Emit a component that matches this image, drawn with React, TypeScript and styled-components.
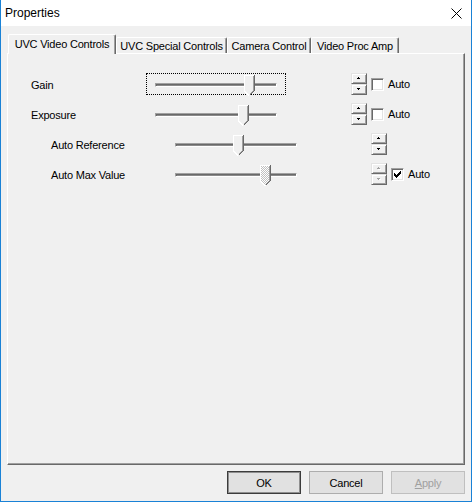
import React from "react";
import styled, { createGlobalStyle, css } from "styled-components";

const GlobalStyle = createGlobalStyle`
  html, body { margin: 0; padding: 0; background: #f0f0f0; overflow: hidden; }
  * { box-sizing: border-box; }
`;

const FONT = `"Liberation Sans", Arial, sans-serif`;

const Window = styled.div`
  width: 472px;
  height: 502px;
  display: flex;
  flex-direction: column;
  background: #f0f0f0;
  border: 1px solid #1a82d6;
  border-top: none;
  font-family: ${FONT};
  font-size: 11px;
  letter-spacing: -0.2px;
  color: #000;
`;

const TitleBar = styled.div`
  height: 26px;
  flex: none;
  background: #fff;
  display: flex;
  align-items: center;
  justify-content: space-between;
  padding: 0 9px 0 4px;
`;

const Title = styled.span`
  font-size: 12px;
  letter-spacing: 0;
  font-family: ${FONT};
`;

const Body = styled.div`
  flex: 1;
  display: flex;
  flex-direction: column;
  padding: 8px 6px 7px 6px;
  min-height: 0;
`;

const TabStrip = styled.div`
  height: 19px;
  flex: none;
  display: flex;
  align-items: flex-end;
  padding-left: 1px;
`;

const Tab = styled.div<{ $active?: boolean; $w: number }>`
  width: ${(p) => p.$w}px;
  height: ${(p) => (p.$active ? 20 : 16)}px;
  flex: none;
  display: flex;
  align-items: center;
  justify-content: center;
  white-space: nowrap;
  background: #f0f0f0;
  border-top: 1px solid #fff;
  border-left: 1px solid #fff;
  border-right: 1px solid #696969;
  box-shadow: inset -1px 0 0 #a0a0a0;
  border-radius: 2px 2px 0 0;
  ${(p) =>
    p.$active
      ? css`
          margin-bottom: -1px;
          position: relative;
          z-index: 1;
          padding-bottom: 2px;
        `
      : css`
          padding-top: 1px;
        `}
`;

const Panel = styled.div`
  flex: 1;
  display: flex;
  flex-direction: column;
  gap: 8px;
  padding: 19px 0 0 23px;
  border-top: 1px solid #fff;
  border-left: 1px solid #fff;
  border-right: 1px solid #696969;
  border-bottom: 1px solid #696969;
  box-shadow: inset -1px -1px 0 #a0a0a0;
`;

const Row = styled.div<{ $indent?: number }>`
  height: 22px;
  display: flex;
  align-items: center;
  padding-left: ${(p) => p.$indent ?? 0}px;
`;

const Label = styled.div`
  width: 115px;
  flex: none;
  white-space: nowrap;
  padding-top: 1px;
`;

const SliderBox = styled.div<{ $focused?: boolean }>`
  position: relative;
  width: 140px;
  height: 22px;
  flex: none;
  padding: 10px 8px 0 8px;
  border: 1px dotted ${(p) => (p.$focused ? "#000" : "transparent")};
`;

const Track = styled.div`
  height: 4px;
  margin-top: -1px;
  border-top: 1px solid #a0a0a0;
  border-left: 1px solid #a0a0a0;
  border-bottom: 1px solid #fff;
  border-right: 1px solid #fff;
  background: #8a8a8a;
  box-shadow: inset 1px 1px 0 #696969;
`;

const ThumbWrap = styled.div`
  position: absolute;
  top: 1px;
  width: 11px;
  height: 21px;
  line-height: 0;
`;

const Thumb: React.FC<{ disabled?: boolean; left: number }> = ({ disabled, left }) => (
  <ThumbWrap style={{ left }}>
    <svg width="11" height="21" viewBox="0 0 11 21" shapeRendering="crispEdges">
      <defs>
        <pattern id="hatch" width="2" height="2" patternUnits="userSpaceOnUse">
          <rect width="2" height="2" fill="#ffffff" />
          <rect width="1" height="1" fill="#c0c0c0" />
          <rect x="1" y="1" width="1" height="1" fill="#c0c0c0" />
        </pattern>
      </defs>
      <polygon points="0,0 11,0 11,16 5.5,21 0,16" fill={disabled ? "url(#hatch)" : "#f0f0f0"} />
      <polyline points="5,20.5 0.5,16 0.5,0.5 10,0.5" fill="none" stroke="#fff" />
      <polyline points="9.5,1 9.5,15.5 5.5,19.5" fill="none" stroke="#a0a0a0" />
      <polyline points="10.5,0 10.5,15.5 5.5,20.5" fill="none" stroke="#696969" />
    </svg>
  </ThumbWrap>
);

const Slider: React.FC<{ value: number; focused?: boolean; disabled?: boolean }> = ({
  value,
  focused,
  disabled,
}) => (
  <SliderBox $focused={focused}>
    <Track />
    <Thumb disabled={disabled} left={Math.round(2 + value * 123)} />
  </SliderBox>
);

const Spinner = styled.div<{ $gap: number }>`
  margin-left: ${(p) => p.$gap}px;
  width: 16px;
  height: 22px;
  flex: none;
  display: flex;
  flex-direction: column;
`;

const SpinButton = styled.div`
  height: 11px;
  display: flex;
  align-items: center;
  justify-content: center;
  background: #f0f0f0;
  border-top: 1px solid #e3e3e3;
  border-left: 1px solid #e3e3e3;
  border-bottom: 1px solid #696969;
  border-right: 1px solid #696969;
  box-shadow: inset 1px 1px 0 #fff, inset -1px -1px 0 #a0a0a0;
  line-height: 0;
`;

const Arrow: React.FC<{ up?: boolean; disabled?: boolean }> = ({ up, disabled }) => {
  const c = disabled ? "#a0a0a0" : "#000";
  return (
    <svg width="4" height="3" viewBox="0 0 4 3" shapeRendering="crispEdges">
      {disabled && <rect x="1" y={up ? 2 : 1} width="3" height="1" fill="#fff" />}
      {up ? (
        <>
          <rect x="1" y="0" width="1" height="1" fill={c} />
          <rect x="0" y="1" width="3" height="1" fill={c} />
        </>
      ) : (
        <>
          <rect x="0" y="0" width="3" height="1" fill={c} />
          <rect x="1" y="1" width="1" height="1" fill={c} />
        </>
      )}
    </svg>
  );
};

const Spin: React.FC<{ gap: number; disabled?: boolean }> = ({ gap, disabled }) => (
  <Spinner $gap={gap}>
    <SpinButton>
      <Arrow up disabled={disabled} />
    </SpinButton>
    <SpinButton>
      <Arrow disabled={disabled} />
    </SpinButton>
  </Spinner>
);

const CheckLabel = styled.label`
  display: flex;
  align-items: center;
  gap: 4px;
  margin-left: 4px;
  white-space: nowrap;
`;

const Box = styled.span`
  width: 13px;
  height: 13px;
  flex: none;
  display: flex;
  align-items: center;
  justify-content: center;
  background: #fff;
  border-top: 1px solid #a0a0a0;
  border-left: 1px solid #a0a0a0;
  border-bottom: 1px solid #fff;
  border-right: 1px solid #fff;
  box-shadow: inset 1px 1px 0 #696969, inset -1px -1px 0 #e3e3e3;
  line-height: 0;
`;

const Check: React.FC<{ checked?: boolean }> = ({ checked }) => (
  <CheckLabel>
    <Box>
      {checked && (
        <svg width="7" height="7" viewBox="0 0 7 7" shapeRendering="crispEdges">
          <path
            d="M0 2h1v1h1v1h1v-1h1v-1h1v-1h1v-1h1v3h-1v1h-1v1h-1v1h-1v1h-1v-1h-1v-1h-1v-1h-1z"
            fill="#000"
          />
        </svg>
      )}
    </Box>
    Auto
  </CheckLabel>
);

const ButtonBar = styled.div`
  flex: none;
  display: flex;
  justify-content: flex-end;
  gap: 8px;
  margin-top: 6px;
  height: 23px;
`;

const Button = styled.button<{ $default?: boolean }>`
  width: 74px;
  height: 23px;
  padding: 0;
  font-family: ${FONT};
  font-size: 11px;
  letter-spacing: -0.2px;
  color: ${(p) => (p.disabled ? "#a0a0a0" : "#000")};
  background: #e1e1e1;
  border: 1px solid ${(p) => (p.$default ? "#3c3c3c" : p.disabled ? "#bfbfbf" : "#adadad")};
  box-shadow: ${(p) => (p.$default ? "inset 0 0 0 1px #8f8f8f" : "none")};
  u { text-decoration: underline; }
`;

const CloseIcon = () => (
  <svg width="11" height="11" viewBox="0 0 11 11">
    <path d="M0.5 0.5L10.5 10.5M10.5 0.5L0.5 10.5" stroke="#000" strokeWidth="1" />
  </svg>
);

export default function App() {
  return (
    <>
      <GlobalStyle />
      <Window>
        <TitleBar>
          <Title>Properties</Title>
          <CloseIcon />
        </TitleBar>
        <Body>
          <TabStrip>
            <Tab $active $w={108}>UVC Video Controls</Tab>
            <Tab $w={111}>UVC Special Controls</Tab>
            <Tab $w={84}>Camera Control</Tab>
            <Tab $w={88}>Video Proc Amp</Tab>
          </TabStrip>
          <Panel>
            <Row>
              <Label>Gain</Label>
              <Slider value={0.77} focused />
              <Spin gap={65} />
              <Check />
            </Row>
            <Row>
              <Label>Exposure</Label>
              <Slider value={0.72} />
              <Spin gap={65} />
              <Check />
            </Row>
            <Row $indent={20}>
              <Label>Auto Reference</Label>
              <Slider value={0.52} />
              <Spin gap={65} />
            </Row>
            <Row $indent={20}>
              <Label>Auto Max Value</Label>
              <Slider value={0.74} disabled />
              <Spin gap={65} disabled />
              <Check checked />
            </Row>
          </Panel>
          <ButtonBar>
            <Button $default>OK</Button>
            <Button>Cancel</Button>
            <Button disabled>
              <u>A</u>pply
            </Button>
          </ButtonBar>
        </Body>
      </Window>
    </>
  );
}
